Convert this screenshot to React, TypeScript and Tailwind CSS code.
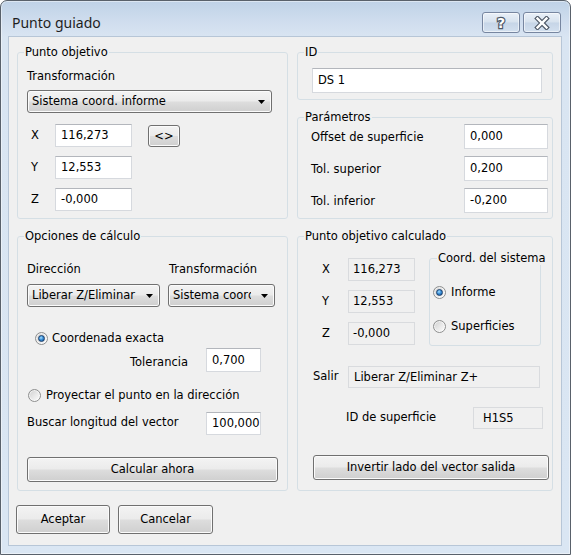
import React from "react";

const btnBase =
  "border border-[#707070] rounded-[3px] bg-[linear-gradient(to_bottom,#f3f3f3_0%,#ebebeb_48%,#dddddd_52%,#cfcfcf_100%)] shadow-[inset_0_0_0_1px_#fbfbfb]";

function Button({ className, children }: { className: string; children: React.ReactNode }) {
  return (
    <div className={`${btnBase} flex items-center justify-center leading-[13px] ${className}`}>
      {children}
    </div>
  );
}

function Select({ className, text, textClass }: { className: string; text: string; textClass?: string }) {
  return (
    <div className={`${btnBase} flex items-center pl-[4px] pr-[6px] leading-[13px] ${className}`}>
      <span className={`overflow-hidden whitespace-nowrap ${textClass ?? "flex-1 mr-[3px]"}`}>{text}</span>
      <svg width="7" height="4" viewBox="0 0 7 4" className="shrink-0 ml-auto">
        <polygon points="0,0 7,0 3.5,4" fill="#000" />
      </svg>
    </div>
  );
}

function TextBox({ className, children }: { className: string; children: React.ReactNode }) {
  return (
    <div
      className={`bg-white border border-[#d6d9de] border-t-[#b3b6bc] flex items-center pl-[5px] leading-[13px] whitespace-nowrap shrink-0 ${className}`}
    >
      {children}
    </div>
  );
}

function ReadBox({ className, children }: { className: string; children: React.ReactNode }) {
  return (
    <div
      className={`bg-[#f0f0f0] border border-[#d9dbde] flex items-center leading-[13px] whitespace-nowrap shrink-0 ${className}`}
    >
      {children}
    </div>
  );
}

function Radio({ checked }: { checked?: boolean }) {
  return (
    <span className="w-[13px] h-[13px] rounded-full border border-[#8e8f8f] bg-[linear-gradient(135deg,#cfcfcf_0%,#ececec_60%,#fdfdfd_100%)] shadow-[inset_0_0_0_1px_rgba(255,255,255,0.6)] flex items-center justify-center shrink-0">
      {checked && (
        <span className="w-[7px] h-[7px] rounded-full border border-[#1b3f6b] bg-[radial-gradient(circle_at_40%_35%,#a6e0ff_0%,#3b8fd8_45%,#0d4a8c_100%)]" />
      )}
    </span>
  );
}

function Legend({ children }: { children: React.ReactNode }) {
  return <legend className="ml-[6px] px-[1px] leading-[13px] whitespace-nowrap">{children}</legend>;
}

const fs = "border border-[#d5dfe5] rounded-[3px] min-w-0 shrink-0";

export default function App() {
  return (
    <div className="w-[571px] h-[555px] border border-[#59616b] rounded-t-[7px] bg-[linear-gradient(to_bottom,#bfd2e7_0px,#cfddee_20px,#d9e5f2_36px,#dae6f3_100%)] shadow-[inset_0_0_0_1px_rgba(255,255,255,0.45)] flex flex-col font-['DejaVu_Sans',sans-serif] text-[11.5px] text-black overflow-hidden">
      {/* Title bar */}
      <div className="h-[35px] flex items-start shrink-0">
        <div className="pl-[11px] pt-[12px] text-[14px] leading-[20px] font-['Noto_Sans',sans-serif] text-[#1e1e1e]">
          Punto guiado
        </div>
        <div className="ml-auto mt-[11px] mr-[9px] flex gap-[3px]">
          <div className="w-[38px] h-[21px] rounded-[3px] border border-[#7786a0] bg-[linear-gradient(to_bottom,#e9f0f8_0%,#d7e2ee_48%,#c6d5e7_52%,#d3e0ef_100%)] shadow-[inset_0_0_0_1px_rgba(255,255,255,0.55)] flex items-center justify-center">
            <svg width="12" height="16" viewBox="0 0 12 16">
              <text
                x="6"
                y="13"
                textAnchor="middle"
                fontSize="14"
                fontWeight="bold"
                fontFamily="DejaVu Sans, sans-serif"
                fill="#ffffff"
                stroke="#4e5866"
                strokeWidth="2.4"
                paintOrder="stroke"
              >
                ?
              </text>
            </svg>
          </div>
          <div className="w-[38px] h-[21px] rounded-[3px] border border-[#7786a0] bg-[linear-gradient(to_bottom,#e9f0f8_0%,#d7e2ee_48%,#c6d5e7_52%,#d3e0ef_100%)] shadow-[inset_0_0_0_1px_rgba(255,255,255,0.55)] flex items-center justify-center">
            <svg width="16" height="14" viewBox="0 0 16 14">
              <path d="M3.5 2.5 L12.5 11.5 M12.5 2.5 L3.5 11.5" stroke="#4e5866" strokeWidth="4.6" strokeLinecap="square" />
              <path d="M3.5 2.5 L12.5 11.5 M12.5 2.5 L3.5 11.5" stroke="#ffffff" strokeWidth="2.4" strokeLinecap="square" />
            </svg>
          </div>
        </div>
      </div>

      {/* Client area */}
      <div className="ml-[7px] w-[554px] h-[510px] bg-[#f0f0f0] border border-[#b7c6d7] flex flex-col shrink-0">
        {/* Row 1 */}
        <div className="mt-[9px] ml-[8px] flex gap-[9px]">
          <fieldset className={`${fs} w-[271px] h-[173px]`}>
            <Legend>Punto objetivo</Legend>
            <div className="pl-[9px] flex flex-col">
              <div className="mt-[11px] leading-[13px]">Transformación</div>
              <Select className="mt-[7px] w-[245px] h-[23px]" text="Sistema coord. informe" />
              <div className="mt-[11px] flex items-start h-[23px]">
                <span className="w-[28px] pl-[4px] self-center">X</span>
                <TextBox className="w-[77px] h-[23px]">116,273</TextBox>
                <Button className="ml-[16px] mt-[1px] w-[32px] h-[22px]">&lt;&gt;</Button>
              </div>
              <div className="mt-[9px] flex items-center h-[23px]">
                <span className="w-[28px] pl-[4px]">Y</span>
                <TextBox className="w-[77px] h-[23px]">12,553</TextBox>
              </div>
              <div className="mt-[9px] flex items-center h-[23px]">
                <span className="w-[28px] pl-[4px]">Z</span>
                <TextBox className="w-[77px] h-[23px]">-0,000</TextBox>
              </div>
            </div>
          </fieldset>

          <div className="flex flex-col w-[256px]">
            <fieldset className={`${fs} w-[256px] h-[54px]`}>
              <Legend>ID</Legend>
              <div className="pl-[14px] mt-[9px]">
                <TextBox className="w-[230px] h-[25px]">DS 1</TextBox>
              </div>
            </fieldset>
            <fieldset className={`${fs} mt-[11px] w-[256px] h-[108px]`}>
              <Legend>Parámetros</Legend>
              <div className="pl-[13px] pr-[4px] flex flex-col gap-[7px]">
                <div className="flex justify-between items-center h-[25px]">
                  <span className="pt-[3px]">Offset de superficie</span>
                  <TextBox className="w-[84px] h-[25px]">0,000</TextBox>
                </div>
                <div className="flex justify-between items-center h-[25px]">
                  <span className="pt-[3px]">Tol. superior</span>
                  <TextBox className="w-[84px] h-[25px]">0,200</TextBox>
                </div>
                <div className="flex justify-between items-center h-[25px]">
                  <span className="pt-[3px]">Tol. inferior</span>
                  <TextBox className="w-[84px] h-[25px]">-0,200</TextBox>
                </div>
              </div>
            </fieldset>
          </div>
        </div>

        {/* Row 2 */}
        <div className="mt-[11px] ml-[8px] flex gap-[9px]">
          <fieldset className={`${fs} w-[271px] h-[261px]`}>
            <Legend>Opciones de cálculo</Legend>
            <div className="flex flex-col">
              <div className="mt-[20px] pl-[9px] flex leading-[13px]">
                <span className="w-[142px]">Dirección</span>
                <span>Transformación</span>
              </div>
              <div className="mt-[8px] pl-[9px] flex gap-[8px]">
                <Select className="w-[133px] h-[23px]" text="Liberar Z/Eliminar" />
                <Select className="w-[107px] h-[23px]" text="Sistema coord. informe" textClass="w-[78px]" />
              </div>
              <div className="mt-[24px] h-[15px] pl-[17px] flex items-center">
                <Radio checked />
                <span className="ml-[4px]">Coordenada exacta</span>
              </div>
              <div className="mt-[2px] flex items-start">
                <span className="w-[188px] pl-[112px] mt-[8px] leading-[13px]">Tolerancia</span>
                <TextBox className="w-[55px] h-[24px]">0,700</TextBox>
              </div>
              <div className="mt-[16px] h-[15px] pl-[10px] flex items-center">
                <Radio />
                <span className="ml-[5px]">Proyectar el punto en la dirección</span>
              </div>
              <div className="mt-[9px] flex items-start">
                <span className="w-[188px] pl-[9px] mt-[4px] leading-[13px]">Buscar longitud del vector</span>
                <TextBox className="w-[55px] h-[23px]">100,000</TextBox>
              </div>
              <Button className="mt-[22px] ml-[9px] w-[251px] h-[25px]">Calcular ahora</Button>
            </div>
          </fieldset>

          <fieldset className={`${fs} w-[256px] h-[261px]`}>
            <Legend>Punto objetivo calculado</Legend>
            <div className="flex flex-col">
              <div className="mt-[9px] flex items-start">
                <div className="mt-[6px] flex flex-col gap-[9px]">
                  <div className="flex items-center">
                    <span className="w-[50px] pl-[24px]">X</span>
                    <ReadBox className="w-[67px] h-[23px] pl-[4px]">116,273</ReadBox>
                  </div>
                  <div className="flex items-center">
                    <span className="w-[50px] pl-[24px]">Y</span>
                    <ReadBox className="w-[67px] h-[23px] pl-[4px]">12,553</ReadBox>
                  </div>
                  <div className="flex items-center">
                    <span className="w-[50px] pl-[24px]">Z</span>
                    <ReadBox className="w-[67px] h-[23px] pl-[4px]">-0,000</ReadBox>
                  </div>
                </div>
                <fieldset className={`${fs} ml-[14px] w-[112px] h-[94px]`}>
                  <legend className="ml-[7px] px-[1px] leading-[13px] whitespace-nowrap">Coord. del sistema</legend>
                  <div className="pl-[3px] flex flex-col">
                    <div className="mt-[20px] h-[15px] flex items-center">
                      <Radio checked />
                      <span className="ml-[5px]">Informe</span>
                    </div>
                    <div className="mt-[19px] h-[15px] flex items-center">
                      <Radio />
                      <span className="ml-[5px]">Superficies</span>
                    </div>
                  </div>
                </fieldset>
              </div>
              <div className="mt-[20px] flex items-center">
                <span className="w-[50px] pl-[15px]">Salir</span>
                <ReadBox className="w-[192px] h-[22px] pl-[5px]">Liberar Z/Eliminar Z+</ReadBox>
              </div>
              <div className="mt-[19px] flex items-center">
                <span className="w-[175px] pl-[48px]">ID de superficie</span>
                <ReadBox className="w-[70px] h-[22px] pl-[9px]">H1S5</ReadBox>
              </div>
              <Button className="mt-[26px] ml-[15px] w-[236px] h-[25px]">Invertir lado del vector salida</Button>
            </div>
          </fieldset>
        </div>

        {/* Bottom buttons */}
        <div className="mt-[14px] ml-[7px] flex gap-[8px]">
          <Button className="w-[94px] h-[29px]">Aceptar</Button>
          <Button className="w-[95px] h-[29px]">Cancelar</Button>
        </div>
      </div>
    </div>
  );
}
